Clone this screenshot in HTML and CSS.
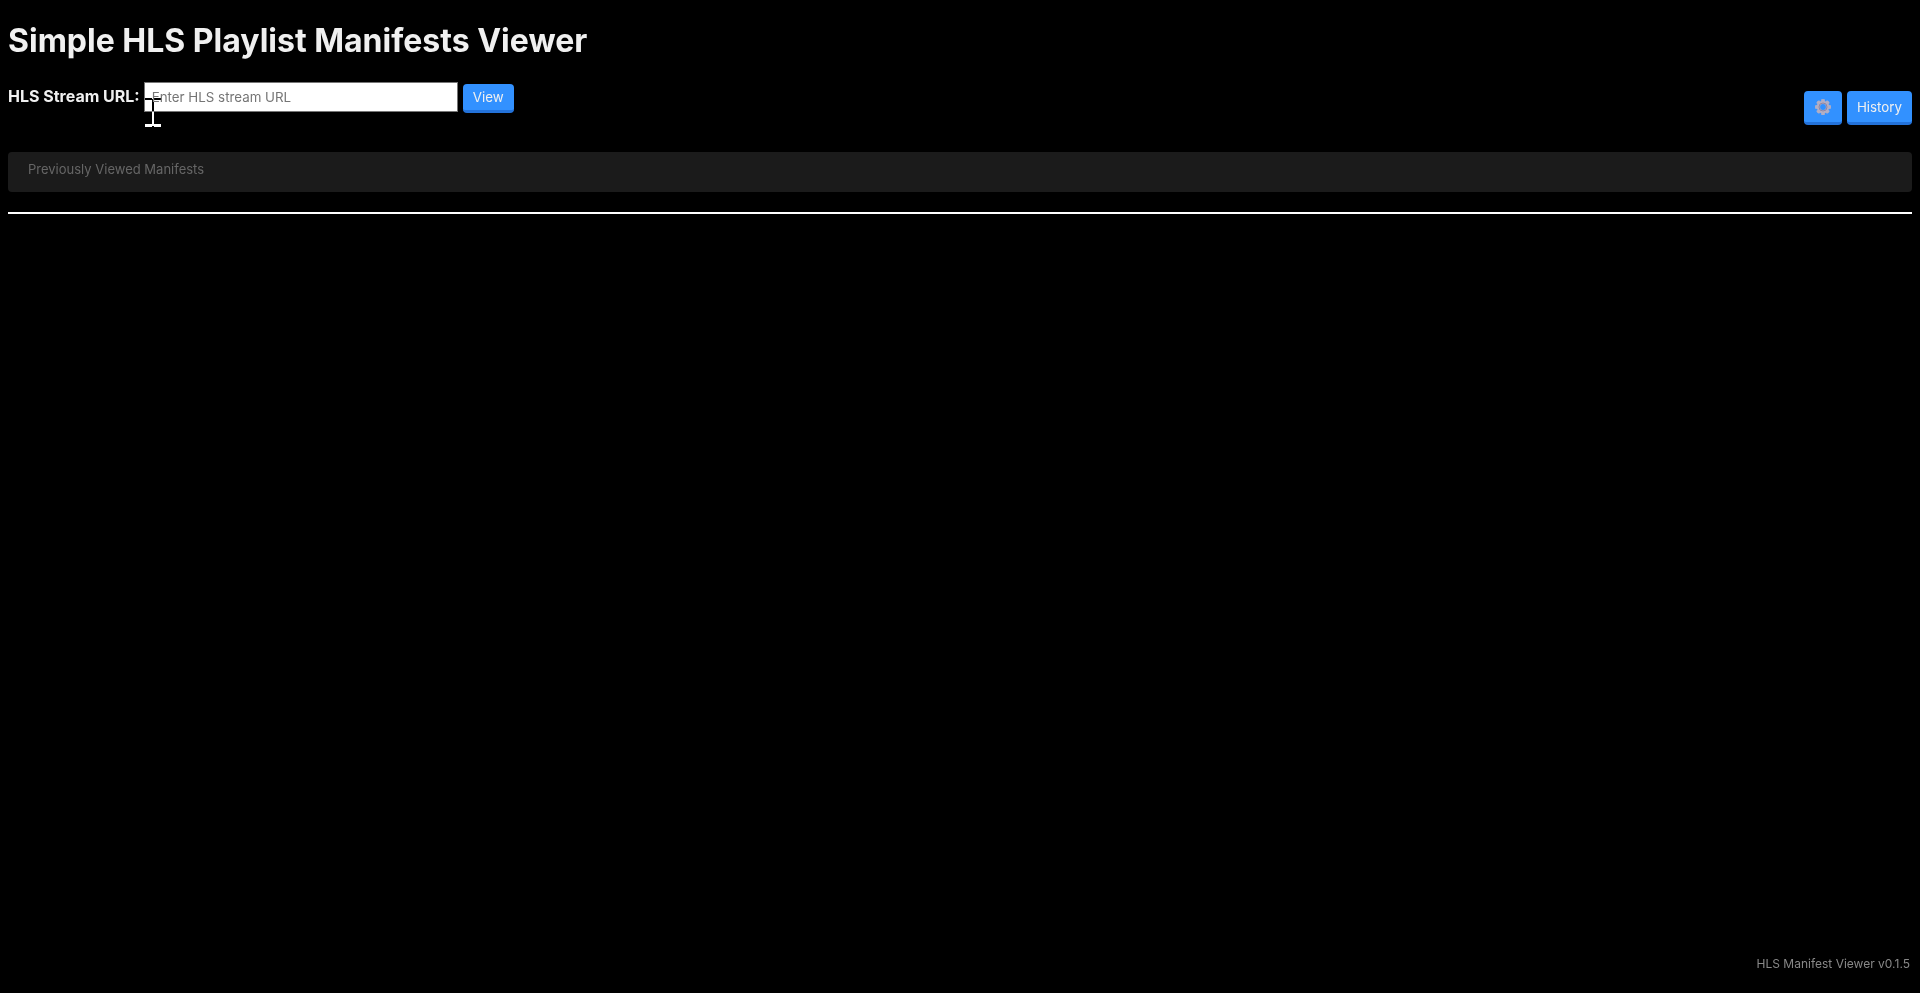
FILE: index.html
```html
<!DOCTYPE html>
<html lang="en">
<head>
<meta charset="utf-8">
<title>Simple HLS Playlist Manifests Viewer</title>
<link rel="stylesheet" href="styles.css">
</head>
<body>
<header>
  <h1 class="title">Simple HLS Playlist Manifests Viewer</h1>
  <div class="toolbar">
    <form class="stream-form">
      <label class="stream-label" for="stream-url">HLS Stream URL:</label>
      <div class="field">
        <input class="stream-input" id="stream-url" type="text" placeholder="Enter HLS stream URL">
        <svg class="text-cursor" viewBox="0 0 16 29" aria-hidden="true"><path fill="#fff" d="M0 0H7V1H9V0H16V2H9V26H16V29H9V28H7V29H0V26H7V2H0Z"/></svg>
      </div>
      <button class="button button-small" type="button">View</button>
    </form>
    <div class="actions">
      <button class="button" type="button" aria-label="Settings">
        <svg class="gear" viewBox="0 0 16 16" aria-hidden="true">
          <g fill="#b2aec4">
            <path id="teeth" d="M6 0.5Q8-.5 10 .5L9.500 4H6.500ZM6 15.500Q8 16.500 10 15.500L9.500 12H6.500ZM.5 6Q-.5 8 .5 10L4 9.500V6.500ZM15.500 6Q16.500 8 15.500 10L12 9.500V6.500Z"/>
            <use href="#teeth" transform="rotate(45 8 8)"/>
          </g>
          <circle cx="8" cy="8" r="4.600" fill="none" stroke="#b2aec4" stroke-width="3.400"/>
          <circle cx="8" cy="8" r="4" fill="none" stroke="#8f87a5" stroke-width="1"/>
        </svg>
      </button>
      <button class="button" type="button">History</button>
    </div>
  </div>
</header>
<main>
  <section class="history">Previously Viewed Manifests</section>
  <hr class="divider">
</main>
<footer class="footer">HLS Manifest Viewer v0.1.5</footer>
</body>
</html>
```
FILE: styles.css
```css
* {
  box-sizing: border-box;
}

body {
  display: flex;
  flex-direction: column;
  min-height: 100vh;
  margin: 0;
  padding: 20px 8px;
  background: #000;
  color: #f0f0f0;
  font-family: Inter, sans-serif;
}

.title {
  margin: 0 0 20px;
  font-size: 32px;
  line-height: 42px;
  font-weight: 700;
}

.toolbar {
  display: flex;
  justify-content: space-between;
}

.stream-form {
  display: flex;
  align-items: flex-start;
}

.stream-label {
  margin-right: 4px;
  font-size: 16px;
  line-height: 28px;
  font-weight: 700;
}

.field {
  position: relative;
  margin-right: 5px;
}

.stream-input {
  display: block;
  width: 314px;
  height: 30px;
  padding: 0 7px;
  border: 1px solid #767676;
  border-radius: 0;
  background: #fff;
  font-family: Inter, sans-serif;
}

.stream-input::placeholder {
  color: #757575;
}

.text-cursor {
  position: absolute;
  left: 1px;
  top: 16px;
  width: 16px;
  height: 29px;
  mix-blend-mode: difference;
}

.actions {
  display: flex;
  gap: 5px;
  padding-top: 9px;
}

.button {
  display: flex;
  align-items: center;
  justify-content: center;
  height: 34px;
  padding: 0 10px;
  border: 0;
  border-bottom: 3px solid #2372da;
  border-radius: 4px;
  background: #3291ff;
  color: #f0f0f0;
  font-family: Inter, sans-serif;
}

.button-small {
  height: 29px;
  margin-top: 2px;
}

.gear {
  width: 16px;
  height: 16px;
  margin: 0 1px;
}

.history {
  min-height: 40px;
  margin-top: 27px;
  padding: 7px 20px;
  border-radius: 4px;
  background: #1b1b1b;
  color: #666;
  font-size: 13px;
  line-height: 20px;
}

.divider {
  height: 2px;
  margin: 20px 0 0;
  border: 0;
  background: #fff;
}

.footer {
  margin-top: auto;
  padding-right: 2px;
  color: #888;
  font-size: 12px;
  line-height: 18px;
  text-align: right;
}
```
